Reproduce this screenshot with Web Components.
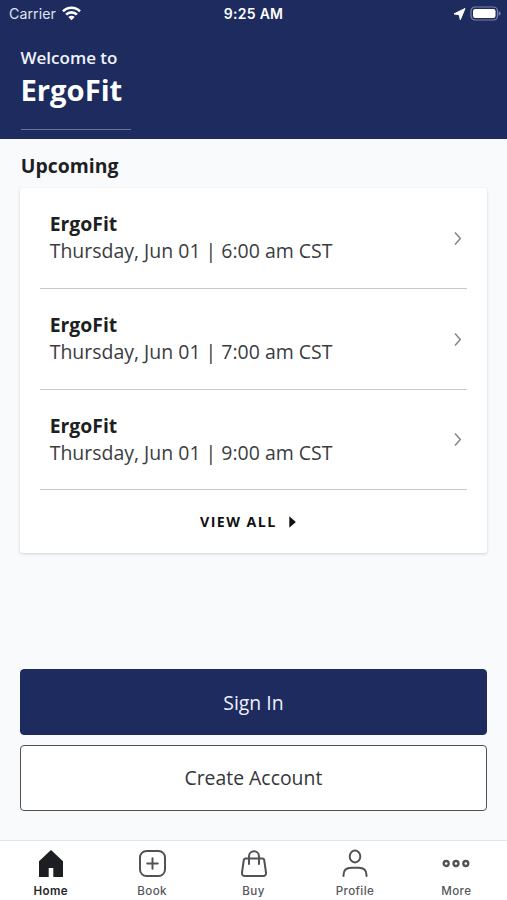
<!DOCTYPE html>
<html lang="en">
<head>
<meta charset="utf-8">
<title>ErgoFit</title>
<style>
html, body { margin: 0; height: 100%; }
body { font-family: "Open Sans", "Noto Sans", sans-serif; color: #1d1f22; background: #f8fafc; overflow: hidden; }
</style>
</head>
<body>
<ergo-app></ergo-app>
<script>
function define(name, html) {
  const template = document.createElement('template');
  template.innerHTML = html;
  customElements.define(name, class extends HTMLElement {
    constructor() {
      super();
      this.attachShadow({ mode: 'open' }).append(template.content.cloneNode(true));
    }
  });
}

define('status-bar', `
<style>
:host { display: grid; grid-template-columns: 1fr auto 1fr; align-items: center; height: 28px; padding: 0 6px 0 9px; box-sizing: border-box; color: #fff; font-family: Inter, sans-serif; font-size: 14.2px; line-height: 28px; }
.left, .right { display: flex; align-items: center; }
.left { gap: 6px; color: #dfe3f2; letter-spacing: .05px; }
.left svg { margin-top: -2px; }
.right { justify-content: flex-end; gap: 4px; margin-top: -1px; }
.time { font-weight: 600; font-size: 14px; letter-spacing: .3px; margin-left: -3px; }
svg { display: block; }
</style>
<div class="left"><span>Carrier</span>
<svg width="19" height="15" viewBox="0 0 19 15"><g fill="none" stroke="#fff" stroke-width="2.6"><path d="M1 5.3a12 12 0 0 1 17 0"/><path d="M4.1 8.6a7.6 7.6 0 0 1 10.8 0"/></g><path d="M6.3 11a4.5 4.5 0 0 1 6.4 0L9.5 14.2z" fill="#fff"/></svg></div>
<span class="time">9:25 AM</span>
<div class="right">
<svg width="13" height="14" viewBox="0 0 13 14"><path d="M12 1.500 7.300 12.700 6.300 7.800 1 6.900z" fill="#fff" stroke="#fff" stroke-width="1" stroke-linejoin="round"/></svg>
<svg width="31" height="16" viewBox="0 0 31 16"><rect x="1" y="1" width="26.500" height="13" rx="4" fill="none" stroke="#7c84aa" stroke-width="1.200"/><rect x="3" y="3" width="22.500" height="9" rx="2.200" fill="#fff"/><path d="M28.700 5.200q2 .7 2 2.300t-2 2.300z" fill="#7c84aa"/></svg></div>`);

define('welcome-header', `
<style>
:host { display: block; height: 139px; box-sizing: border-box; background: #1d2b5e; color: #fff; }
.body { padding: 17px 20.5px 0; }
.hello { font-weight: 600; font-size: 17px; line-height: 26px; color: #eff2fb; }
.name { font-weight: 700; font-size: 29.2px; line-height: 38px; }
.rule { width: 110px; height: 1px; margin-top: 20px; background: #68739b; }
</style>
<status-bar></status-bar>
<div class="body"><div class="hello"><slot name="greeting"></slot></div><div class="name"><slot></slot></div><div class="rule"></div></div>`);

define('class-row', `
<style>
:host { display: flex; align-items: center; justify-content: space-between; height: 100.6px; box-sizing: border-box; padding: 1px 5px 0 9.3px; border-bottom: 1px solid #c8c9ca; }
.text { padding-bottom: 2.4px; }
.title { font-weight: 700; font-size: 19.4px; line-height: 27px; color: #1d1f22; }
.when { font-size: 19.48px; line-height: 27px; color: #3b3c3f; white-space: nowrap; }
svg { display: block; }
</style>
<div class="text"><div class="title"><slot></slot></div><div class="when"><slot name="when"></slot></div></div>
<svg width="9" height="15" viewBox="0 0 9 15"><path d="M2 1.5 7.300 7.5 2 13.5" fill="none" stroke="#838588" stroke-width="1.5"/></svg>`);

define('upcoming-card', `
<style>
:host { display: block; box-sizing: border-box; height: 365px; padding: 0 20px; background: #fff; border-radius: 3px; box-shadow: 0 1px 3px rgba(30,35,45,.18); }
.all { display: flex; justify-content: center; align-items: center; gap: 12px; height: 63px; padding-right: 12px; font-weight: 700; font-size: 14.2px; letter-spacing: 1.45px; color: #101113; }
.all span { margin-top: -1px; }
</style>
<slot></slot>
<div class="all"><span>VIEW ALL</span><svg width="7" height="12" viewBox="0 0 7 12"><path d="M.3.3 6.8 6 .3 11.7z" fill="#101113"/></svg></div>`);

define('action-button', `
<style>
:host { display: flex; align-items: center; justify-content: center; box-sizing: border-box; height: 66px; padding-right: 1px; border: 1px solid #505155; border-radius: 4px; background: #fff; color: #343538; font-size: 19.4px; }
:host([primary]) { background: #1d2b5e; border-color: #1d2b5e; color: #eef1fb; }
</style><slot></slot>`);

define('tab-item', `
<style>
:host { display: flex; flex-direction: column; align-items: center; flex: 1; padding-top: 8px; color: #55575b; font: 500 11.6px/18px Inter, sans-serif; letter-spacing: .4px; }
:host([active]) { color: #25272a; font-weight: 600; }
.icon { height: 30px; margin-bottom: 3px; }
</style>
<div class="icon"><slot name="icon"></slot></div><span><slot></slot></span>`);

define('tab-bar', `
<style>
:host { display: flex; height: 60px; box-sizing: border-box; border-top: 1px solid #e3e4e6; background: #fff; }
svg { display: block; fill: none; stroke: #505256; stroke-width: 2; stroke-linecap: round; stroke-linejoin: round; }
</style>
<tab-item active><svg slot="icon" width="30" height="30" viewBox="0 0 30 30"><path d="M15 1 27 12.3V28h-9.700v-9h-4.600v9H3V12.3z" fill="#1c1e21" stroke="none"/></svg>Home</tab-item>
<tab-item><svg slot="icon" width="30" height="30" viewBox="0 0 30 30"><rect x="3" y="2" width="25" height="25" rx="6.5"/><path d="M15.500 9.2v10.6M10.2 14.5h10.6"/></svg>Book</tab-item>
<tab-item><svg slot="icon" width="30" height="30" viewBox="0 0 30 30"><path d="M6.5 9.5h17q1.4 0 1.7 1.5l1.8 12.5q.3 3.5-3 3.5H6q-3.300 0-3-3.500L4.800 11q.3-1.500 1.700-1.500M10 15V7.200a5 5 0 0 1 10 0V15"/></svg>Buy</tab-item>
<tab-item><svg slot="icon" width="30" height="30" viewBox="0 0 30 30"><ellipse cx="15" cy="7.500" rx="5.300" ry="5.900"/><path d="M3.500 27v-1q0-7.300 8-7.300h7q8 0 8 7.300v1"/></svg>Profile</tab-item>
<tab-item><svg slot="icon" width="30" height="30" viewBox="0 0 30 30"><g stroke-width="2.300"><circle cx="5.200" cy="14.500" r="2.500"/><circle cx="15" cy="14.500" r="2.500"/><circle cx="24.800" cy="14.500" r="2.500"/></g></svg>More</tab-item>`);

define('ergo-app', `
<style>
:host { display: flex; flex-direction: column; height: 900px; width: 507px; background: #f8fafc; }
main { flex: 1; display: flex; flex-direction: column; padding: 13px 19.6px 29.4px 20.4px; }
h2 { margin: 0 0 9.400px .4px; font-size: 19.4px; line-height: 27px; font-weight: 700; }
.actions { display: flex; flex-direction: column; gap: 9.5px; margin-top: auto; }
</style>
<welcome-header><span slot="greeting">Welcome to</span>ErgoFit</welcome-header>
<main>
<h2>Upcoming</h2>
<upcoming-card>
<class-row>ErgoFit<span slot="when">Thursday, Jun 01 | 6:00 am CST</span></class-row>
<class-row>ErgoFit<span slot="when">Thursday, Jun 01 | 7:00 am CST</span></class-row>
<class-row>ErgoFit<span slot="when">Thursday, Jun 01 | 9:00 am CST</span></class-row>
</upcoming-card>
<div class="actions"><action-button primary>Sign In</action-button><action-button>Create Account</action-button></div>
</main>
<tab-bar></tab-bar>`);
</script>
</body>
</html>
